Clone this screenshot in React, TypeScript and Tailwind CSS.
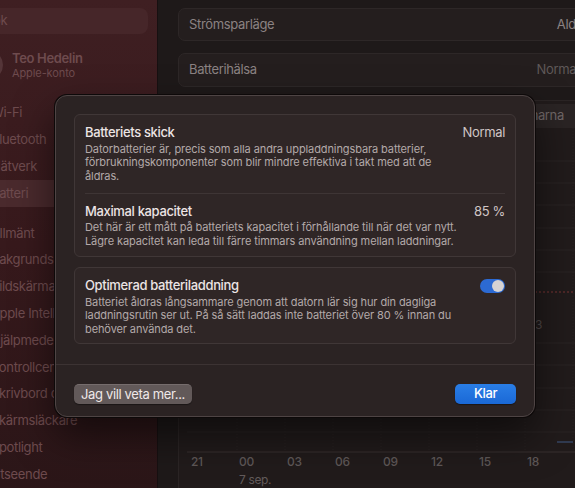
import React from "react";

const firstGroup = ["Wi-Fi", "Bluetooth", "Nätverk", "Batteri"];
const secondGroup = [
  "Allmänt",
  "Bakgrundsbild",
  "Bildskärmar",
  "Apple Intelligence",
  "Hjälpmedel",
  "Kontrollcenter",
  "Skrivbord och Dock",
  "Skärmsläckare",
  "Spotlight",
  "Utseende",
];
const hours = ["21", "00", "03", "06", "09", "12", "15", "18"];

function SidebarItem({ label, selected }: { label: string; selected?: boolean }) {
  return (
    <div
      className={
        "h-[26.8px] -ml-[40px] w-[190px] flex items-center pl-[31px] rounded-[6px] " +
        (selected ? "bg-[#4a2a2d]" : "")
      }
    >
      <span className="text-[13px] text-[#6e4b4e] whitespace-nowrap">{label}</span>
    </div>
  );
}

function Sidebar() {
  return (
    <aside className="w-[158px] shrink-0 h-full bg-gradient-to-b from-[#3f1f22] via-[#37191c] to-[#2b1618] border-r border-[#171011] flex flex-col overflow-hidden">
      <div className="mt-[8px] h-[27px] -ml-[40px] w-[188px] rounded-[8px] bg-[#462629] flex items-center pl-[25px]">
        <span className="text-[13px] text-[#6e4b4e]">Sök</span>
      </div>
      <div className="mt-[16px] -ml-[27px] flex items-center gap-[9px]">
        <div className="w-[30px] h-[30px] rounded-full bg-[#543538] shrink-0" />
        <div className="flex flex-col">
          <span className="text-[13px] leading-[16px] font-semibold text-[#6e4b4e] whitespace-nowrap">Teo Hedelin</span>
          <span className="text-[11px] leading-[14px] tracking-[-0.1px] text-[#6e4b4e] whitespace-nowrap">Apple-konto</span>
        </div>
      </div>
      <div className="mt-[19.7px] flex flex-col">
        {firstGroup.map((l) => (
          <SidebarItem key={l} label={l} selected={l === "Batteri"} />
        ))}
      </div>
      <div className="mt-[13.3px] flex flex-col">
        {secondGroup.map((l) => (
          <SidebarItem key={l} label={l} />
        ))}
      </div>
    </aside>
  );
}

function SettingRow({ label, value, dim }: { label: string; value: string; dim?: boolean }) {
  return (
    <div className="h-full rounded-[7px] bg-[#241e1e] border border-[#2d2727] flex items-center justify-between px-[10px]">
      <span className="text-[13px] text-[#8b8282]">{label}</span>
      <span className={"text-[13px] whitespace-nowrap " + (dim ? "pr-[12px] text-[#5f5858]" : "text-[#8b8282]")}>{value}</span>
    </div>
  );
}

function UsageChart() {
  const topLines = [33, 55, 77, 100, 122, 144];
  const bottomLines = [215, 237, 260, 282, 304];
  const verticals = [58, 106, 154, 202, 250, 298, 346, 394];
  return (
    <svg width="424" height="327" viewBox="0 0 424 327" className="block">
      {verticals.map((x) => (
        <line key={x} x1={x} y1="0" x2={x} y2="324" stroke="#292323" strokeDasharray="1 2" />
      ))}
      {topLines.map((y) => (
        <line key={y} x1="8" y1={y} x2="424" y2={y} stroke="#2a2424" />
      ))}
      <line x1="8" y1="164" x2="424" y2="164" stroke="#7a3535" strokeDasharray="2 2" />
      <text x="356" y="201" fontSize="12" fill="#4f4848" fontFamily="Inter, sans-serif">3</text>
      {bottomLines.map((y) => (
        <line key={y} x1="8" y1={y} x2="424" y2={y} stroke="#2a2424" />
      ))}
      <line x1="378" y1="314" x2="394" y2="314" stroke="#303a50" strokeWidth="2" />
      <line x1="8" y1="324" x2="424" y2="324" stroke="#383131" />
    </svg>
  );
}

function Main() {
  return (
    <main className="flex-1 h-full overflow-hidden">
      <div className="ml-[20px] w-[424px] flex flex-col">
        <div className="mt-[8px] h-[33px]">
          <SettingRow label="Strömsparläge" value="Aldrig" />
        </div>
        <div className="mt-[12px] h-[34px]">
          <SettingRow label="Batterihälsa" value="Normal" dim />
        </div>
        <div className="mt-[13px] rounded-t-[7px] border border-b-0 border-[#2b2525] bg-[#211b1b] flex flex-col h-[400px]">
          <div className="mt-[3px] h-[24px] flex">
            <div className="ml-[228px] w-[190px] rounded-[6px] bg-[#2a2424] flex items-center justify-center">
              <span className="text-[13px] text-[#6f6767] whitespace-nowrap">Senaste 24 timmarna</span>
            </div>
          </div>
          <UsageChart />
          <div className="flex pl-[12px] -mt-[1px]">
            {hours.map((h, i) => (
              <div key={h} className="w-[48px] flex flex-col">
                <span className="text-[12px] leading-[16px] font-medium text-[#5e5757]">{h}</span>
                {i === 1 && (
                  <span className="mt-[2px] text-[12px] leading-[16px] text-[#635b5b] whitespace-nowrap">7 sep.</span>
                )}
              </div>
            ))}
          </div>
        </div>
      </div>
    </main>
  );
}

function Desc({ lines }: { lines: string[] }) {
  return (
    <div className="flex flex-col mt-[1.5px]">
      {lines.map((l) => (
        <span key={l} className="block h-[13.5px] text-[11px] leading-[13.5px] text-[#b3a9a9] whitespace-nowrap tracking-[-0.1px]">
          {l}
        </span>
      ))}
    </div>
  );
}

function Toggle() {
  return (
    <div className="w-[25px] h-[14px] rounded-full bg-[#2c6ad3] flex items-center justify-end p-[1px]">
      <div className="w-[12px] h-[12px] rounded-full bg-[#d6d3d3]" />
    </div>
  );
}

function BatterySheet() {
  return (
    <div className="absolute left-[55px] top-[95px] w-[480px] h-[322px] rounded-[12px] bg-[#2b2323] border border-[#4e4444] shadow-[0_0_0_1px_#0d0909,0_18px_40px_rgba(0,0,0,0.55)] flex flex-col">
      <div className="px-[18px] pt-[18px] flex flex-col gap-[10px]">
        <div className="rounded-[6px] bg-[#2f2626] border border-[#403737] px-[10px] pt-[10px] pb-[8px] flex flex-col">
          <div className="flex items-center justify-between h-[16px]">
            <span className="text-[13px] font-medium text-[#ece4e4]">Batteriets skick</span>
            <span className="text-[13px] text-[#cfc5c5]">Normal</span>
          </div>
          <Desc
            lines={[
              "Datorbatterier är, precis som alla andra uppladdningsbara batterier,",
              "förbrukningskomponenter som blir mindre effektiva i takt med att de",
              "åldras.",
            ]}
          />
          <div className="mt-[9.5px] h-px bg-[#3e3535]" />
          <div className="mt-[10px] flex items-center justify-between h-[16px]">
            <span className="text-[13px] font-medium text-[#ece4e4]">Maximal kapacitet</span>
            <span className="text-[13px] text-[#cfc5c5]">85 %</span>
          </div>
          <Desc
            lines={[
              "Det här är ett mått på batteriets kapacitet i förhållande till när det var nytt.",
              "Lägre kapacitet kan leda till färre timmars användning mellan laddningar.",
            ]}
          />
        </div>
        <div className="rounded-[6px] bg-[#2f2626] border border-[#403737] px-[10px] pt-[10px] pb-[7px] flex flex-col">
          <div className="flex items-center justify-between h-[16px]">
            <span className="text-[13px] font-medium text-[#ece4e4]">Optimerad batteriladdning</span>
            <Toggle />
          </div>
          <Desc
            lines={[
              "Batteriet åldras långsammare genom att datorn lär sig hur din dagliga",
              "laddningsrutin ser ut. På så sätt laddas inte batteriet över 80 % innan du",
              "behöver använda det.",
            ]}
          />
        </div>
      </div>
      <div className="mt-[20px] h-px bg-[#3c3333]" />
      <div className="px-[18px] pt-[19px] flex items-center justify-between">
        <button className="h-[20px] w-[118px] rounded-[5px] bg-[#625959] border-t border-[#766d6d] text-[13px] text-[#efe8e8] whitespace-nowrap flex items-center justify-center shadow-[0_1px_1px_rgba(0,0,0,0.4)]">
          Jag vill veta mer...
        </button>
        <button className="h-[20px] w-[61px] rounded-[5px] bg-gradient-to-b from-[#2a7ee6] to-[#1a68d6] text-[13px] font-medium text-white flex items-center justify-center shadow-[0_1px_1px_rgba(0,0,0,0.4)]">
          Klar
        </button>
      </div>
    </div>
  );
}

export default function App() {
  return (
    <div className="relative w-[575px] h-[488px] overflow-hidden flex bg-[#1e1919] font-[Inter,sans-serif] tracking-[-0.35px]">
      <Sidebar />
      <Main />
      <BatterySheet />
    </div>
  );
}
